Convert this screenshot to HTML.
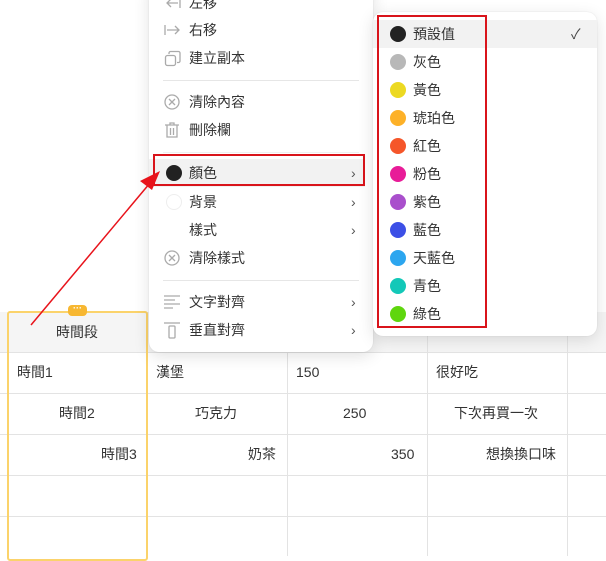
<!DOCTYPE html>
<html><head><meta charset="utf-8"><style>
*{margin:0;padding:0;box-sizing:border-box}
body{width:606px;height:556px;overflow:hidden;background:#fff;font-family:"Liberation Sans","Noto Sans CJK TC",sans-serif;font-size:14px;color:#333;position:relative}
.abs{position:absolute}
.hl{position:absolute;left:0;width:606px;height:1px;background:#e3e3e3}
.vl{position:absolute;top:312px;width:1px;height:244px;background:#e3e3e3}
.cell{position:absolute;height:41px;line-height:41px;color:#333}
.menu{position:absolute;background:#fff;border-radius:10px;box-shadow:0 4px 16px rgba(0,0,0,.12),0 0 1px rgba(0,0,0,.15)}
.it{position:absolute;left:0;right:0;height:28px;line-height:28px}
.it .t{position:absolute;left:40px}
.chev{position:absolute;left:202px;top:0;color:#555;font-size:14px}
.dv{position:absolute;left:14px;right:14px;height:1px;background:#e6e6e6}
.dot{position:absolute;left:17px;top:6px;width:16px;height:16px;border-radius:50%}
</style></head><body>
<div class="abs" style="left:0;top:312px;width:606px;height:40px;background:#f5f5f5"></div>
<div class="hl" style="top:352px"></div>
<div class="hl" style="top:393px"></div>
<div class="hl" style="top:434px"></div>
<div class="hl" style="top:475px"></div>
<div class="hl" style="top:516px"></div>
<div class="vl" style="left:287px"></div>
<div class="vl" style="left:427px"></div>
<div class="vl" style="left:567px"></div>
<div class="vl" style="left:147px"></div>
<div class="cell" style="left:56px;top:312px;height:40px;line-height:40px">時間段</div>
<div class="cell" style="left:17px;top:352px">時間1</div>
<div class="cell" style="left:59px;top:393px">時間2</div>
<div class="cell" style="left:101px;top:434px">時間3</div>
<div class="cell" style="left:156px;top:352px">漢堡</div>
<div class="cell" style="left:195px;top:393px">巧克力</div>
<div class="cell" style="left:248px;top:434px">奶茶</div>
<div class="cell" style="left:296px;top:352px">150</div>
<div class="cell" style="left:343px;top:393px">250</div>
<div class="cell" style="left:391px;top:434px">350</div>
<div class="cell" style="left:436px;top:352px">很好吃</div>
<div class="cell" style="left:454px;top:393px">下次再買一次</div>
<div class="cell" style="left:486px;top:434px">想換換口味</div>
<div class="abs" style="left:7px;top:311px;width:141px;height:250px;border:2px solid #fbd36b;border-radius:3px"></div>
<div class="abs" style="left:68px;top:305px;width:19px;height:11px;background:#f7b731;border-radius:4px;color:#fff;font-size:9px;line-height:6px;text-align:center;font-weight:bold">···</div>

<div class="menu" style="left:149px;top:-20px;width:224px;height:372px">
 <div style="position:absolute;top:38px;left:0;right:0">
  <div class="it" style="top:-29px"><svg class="abs" style="left:15px;top:6px" width="18" height="16"><path d="M16 3v10M14 8H3M7 4L3 8l4 4" stroke="#aaa" fill="none" stroke-width="1.3"/></svg><span class="t">左移</span></div>
  <div class="it" style="top:-2px"><svg class="abs" style="left:15px;top:6px" width="18" height="16"><path d="M1 3v10M3 8h12M11 4l4 4-4 4" stroke="#aaa" fill="none" stroke-width="1.3"/></svg><span class="t">右移</span></div>
  <div class="it" style="top:26px"><svg class="abs" style="left:15px;top:6px" width="18" height="18"><rect x="1.5" y="5.5" width="10" height="10" rx="2" stroke="#aaa" fill="none" stroke-width="1.3"/><path d="M5 4V3a1.5 1.5 0 0 1 1.5-1.5h8A1.5 1.5 0 0 1 16 3v8a1.5 1.5 0 0 1-1.5 1.5H13" stroke="#aaa" fill="none" stroke-width="1.3"/></svg><span class="t">建立副本</span></div>
  <div class="dv" style="top:62px"></div>
  <div class="it" style="top:70px"><svg class="abs" style="left:15px;top:6px" width="18" height="18"><circle cx="8" cy="8" r="7" stroke="#aaa" fill="none" stroke-width="1.3"/><path d="M5 5l6 6M11 5l-6 6" stroke="#aaa" stroke-width="1.3"/></svg><span class="t">清除內容</span></div>
  <div class="it" style="top:98px"><svg class="abs" style="left:15px;top:6px" width="18" height="18"><path d="M1 3h14M6 3V1h4v2M3 3v12h10V3M6.5 6v7M9.5 6v7" stroke="#aaa" fill="none" stroke-width="1.3"/></svg><span class="t">刪除欄</span></div>
  <div class="dv" style="top:134px;background:#f0f0f0"></div>
  <div class="it" style="top:141px;background:#f2f2f2;left:0;right:8px"><div class="dot" style="background:#222"></div><span class="t">顏色</span><span class="chev">›</span></div>
  <div class="it" style="top:170px"><div class="dot" style="border:1px solid #eee"></div><span class="t">背景</span><span class="chev">›</span></div>
  <div class="it" style="top:198px"><span class="t">樣式</span><span class="chev">›</span></div>
  <div class="it" style="top:226px"><svg class="abs" style="left:15px;top:6px" width="18" height="18"><circle cx="8" cy="8" r="7" stroke="#aaa" fill="none" stroke-width="1.3"/><path d="M5 5l6 6M11 5l-6 6" stroke="#aaa" stroke-width="1.3"/></svg><span class="t">清除樣式</span></div>
  <div class="dv" style="top:262px"></div>
  <div class="it" style="top:270px"><svg class="abs" style="left:15px;top:7px" width="18" height="16"><path d="M0 1h16M0 5h11M0 9h16M0 13h9" stroke="#aaa" stroke-width="1.3"/></svg><span class="t">文字對齊</span><span class="chev">›</span></div>
  <div class="it" style="top:298px"><svg class="abs" style="left:15px;top:6px" width="18" height="18"><path d="M0 1h16" stroke="#aaa" stroke-width="1.3"/><rect x="5" y="4" width="6" height="12" rx="1" stroke="#aaa" fill="none" stroke-width="1.3"/></svg><span class="t">垂直對齊</span><span class="chev">›</span></div>
 </div>
</div>
<div class="abs" style="left:153px;top:154px;width:212px;height:32px;border:2px solid #d9141b"></div>

<div class="menu" style="left:373px;top:12px;width:224px;height:324px">
 <div class="it" style="top:8px;background:#f2f2f2"><div class="dot" style="background:#222"></div><span class="t">預設值</span><span class="abs" style="left:198px;top:0;color:#444">✓</span></div>
 <div class="it" style="top:36px"><div class="dot" style="background:#b8b8b8"></div><span class="t">灰色</span></div>
 <div class="it" style="top:64px"><div class="dot" style="background:#ecd922"></div><span class="t">黃色</span></div>
 <div class="it" style="top:92px"><div class="dot" style="background:#fdb128"></div><span class="t">琥珀色</span></div>
 <div class="it" style="top:120px"><div class="dot" style="background:#f5562a"></div><span class="t">紅色</span></div>
 <div class="it" style="top:148px"><div class="dot" style="background:#e81c98"></div><span class="t">粉色</span></div>
 <div class="it" style="top:176px"><div class="dot" style="background:#a94fcc"></div><span class="t">紫色</span></div>
 <div class="it" style="top:204px"><div class="dot" style="background:#3c4fe6"></div><span class="t">藍色</span></div>
 <div class="it" style="top:232px"><div class="dot" style="background:#2ca6ef"></div><span class="t">天藍色</span></div>
 <div class="it" style="top:260px"><div class="dot" style="background:#13c8b8"></div><span class="t">青色</span></div>
 <div class="it" style="top:288px"><div class="dot" style="background:#5fd60e"></div><span class="t">綠色</span></div>
</div>
<div class="abs" style="left:377px;top:15px;width:110px;height:313px;border:2px solid #d9141b"></div>

<svg class="abs" style="left:0;top:0" width="606" height="556"><path d="M31 325L150 183" stroke="#e8131b" stroke-width="1.5"/><path d="M160 171L140 181L152 190Z" fill="#e8131b"/></svg>
</body></html>
